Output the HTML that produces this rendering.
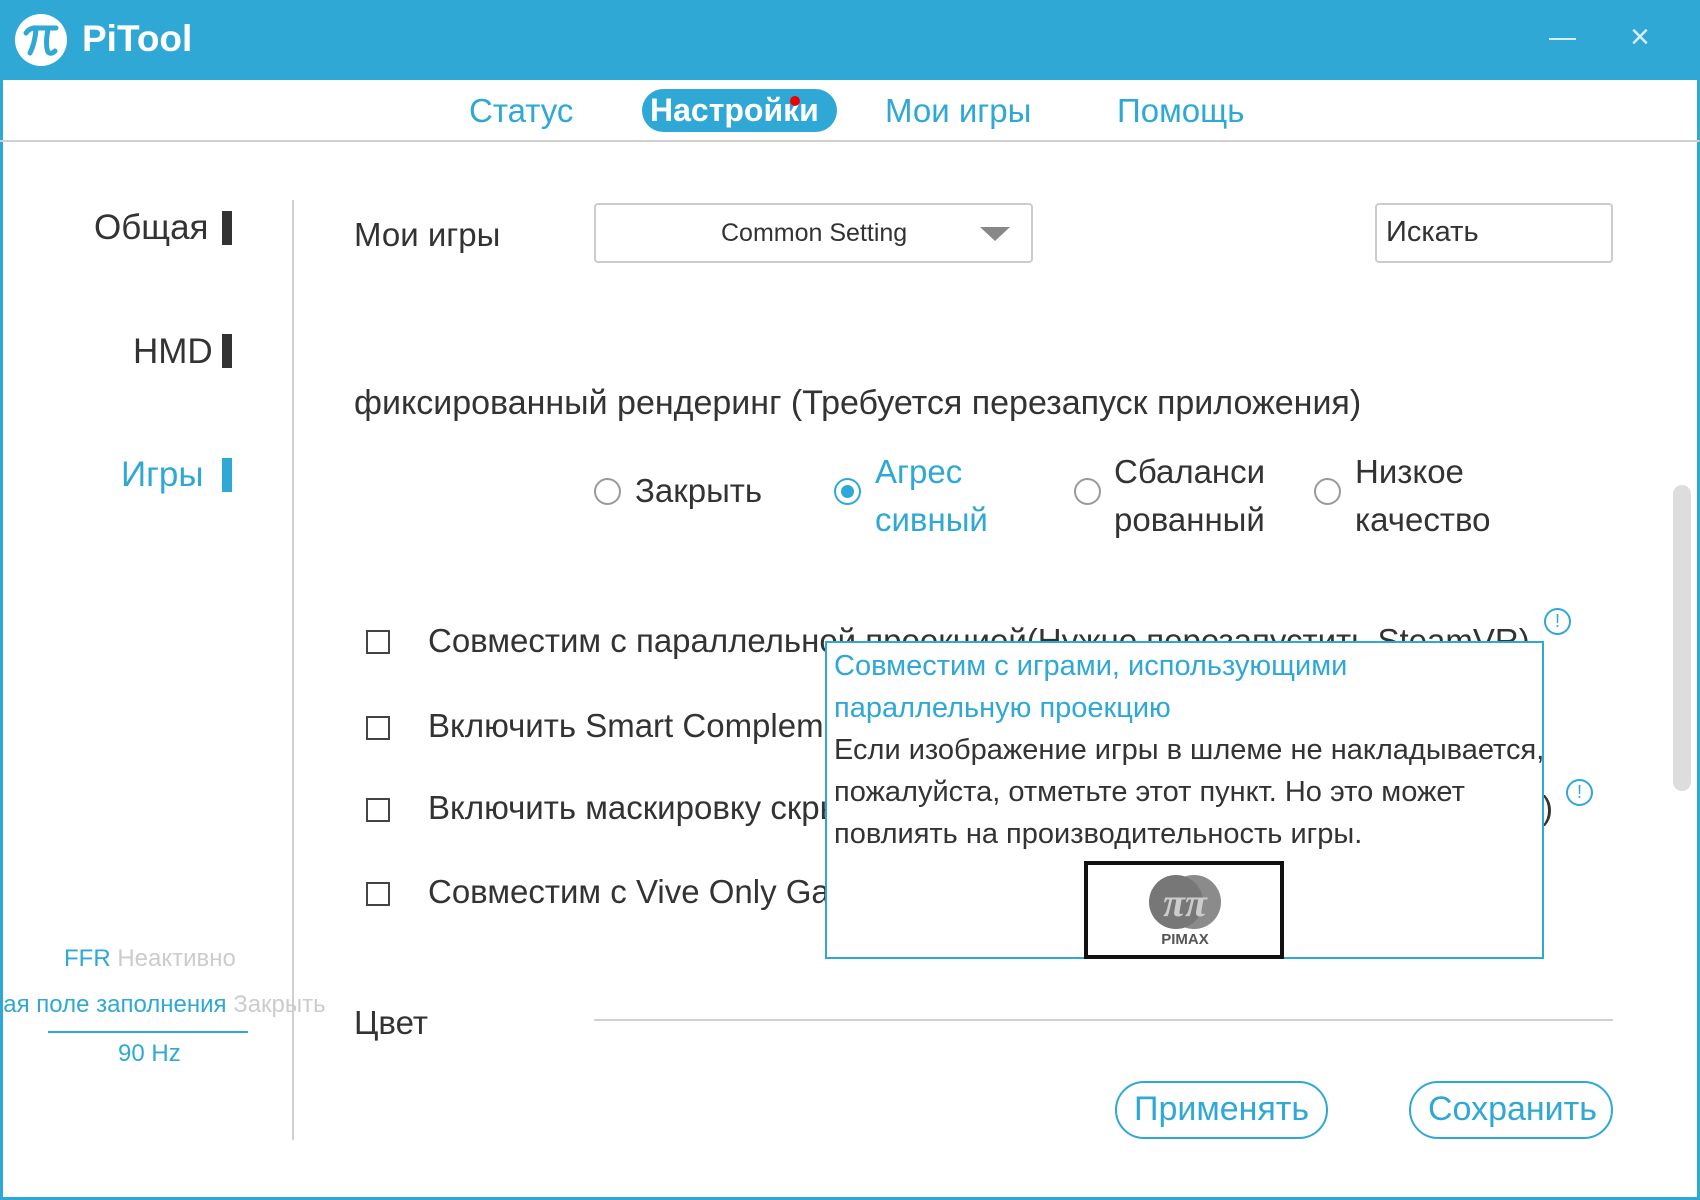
<!DOCTYPE html>
<html><head><meta charset="utf-8"><style>
*{margin:0;padding:0;box-sizing:border-box}
body{width:1700px;height:1200px;position:relative;background:#fff;overflow:hidden;font-family:"Liberation Sans","Noto Sans CJK SC",sans-serif;color:#333}
.a{position:absolute;white-space:nowrap}
.blue{color:#2fa8d5}
.cb{position:absolute;width:24px;height:24px;border:2px solid #444;left:366px}
.rad{position:absolute;width:27px;height:27px;border:2px solid #999;border-radius:50%}
.t{font-size:32px}
.c{font-size:33px}
.info{position:absolute;width:27px;height:27px;border:2px solid #2fa8d5;border-radius:50%;color:#2fa8d5;font-size:18px;text-align:center;line-height:23px}
</style></head><body>
<div class="a" style="left:0;top:0;width:1700px;height:80px;background:#2fa8d5"></div>
<div class="a" style="left:0;top:80px;width:3px;height:1120px;background:#2fa8d5"></div>
<div class="a" style="right:0;top:80px;width:3px;height:1120px;background:#2fa8d5"></div>
<div class="a" style="left:0;bottom:0;width:1700px;height:3px;background:#2fa8d5"></div>
<svg class="a" style="left:14px;top:13px" width="54" height="54" viewBox="0 0 54 54"><circle cx="27" cy="27" r="26" fill="#fff"/><path d="M12 20 Q16 14 24 15 L42 15" stroke="#2fa8d5" stroke-width="5" fill="none" stroke-linecap="round"/><path d="M22 16 Q21 30 16 40" stroke="#2fa8d5" stroke-width="5" fill="none" stroke-linecap="round"/><path d="M34 16 Q31 32 34 39 Q37 42 41 38" stroke="#2fa8d5" stroke-width="5" fill="none" stroke-linecap="round"/></svg>
<div class="a" style="left:82px;top:18px;font-size:37px;font-weight:bold;color:#fff">PiTool</div>
<div class="a" style="left:1549px;top:38px;width:27px;height:2px;background:#d8eef7"></div>
<div class="a" style="left:1630px;top:18px;font-size:34px;color:#d8eef7">×</div>
<div class="a" style="left:0;top:140px;width:1700px;height:2px;background:#d0d0d0"></div>
<div class="a blue" style="left:469px;top:92px;font-size:33px">Статус</div>
<div class="a" style="left:642px;top:89px;width:195px;height:43px;border-radius:22px;background:#2fa8d5"></div>
<div class="a" style="left:650px;top:92px;font-size:32px;font-weight:bold;color:#fff">Настройки</div>
<div class="a" style="left:790px;top:96px;width:10px;height:10px;border-radius:50%;background:#e00"></div>
<div class="a blue" style="left:885px;top:92px;font-size:33px">Мои игры</div>
<div class="a blue" style="left:1117px;top:92px;font-size:33px">Помощь</div>

<div class="a" style="left:94px;top:208px;font-size:35px">Общая</div>
<div class="a" style="left:222px;top:211px;width:10px;height:34px;background:#333"></div>
<div class="a" style="left:133px;top:332px;font-size:35px">HMD</div>
<div class="a" style="left:222px;top:334px;width:10px;height:34px;background:#333"></div>
<div class="a blue" style="left:121px;top:455px;font-size:35px">Игры</div>
<div class="a" style="left:222px;top:458px;width:10px;height:34px;background:#2fa8d5"></div>
<div class="a" style="left:292px;top:200px;width:2px;height:940px;background:#d0d0d0"></div>

<div class="a blue" style="left:64px;top:945px;font-size:24px">FFR <span style="color:#ccc">Неактивно</span></div>
<div class="a blue" style="left:-10px;top:991px;font-size:24px">ная поле заполнения <span style="color:#ccc">Закрыть</span></div>
<div class="a" style="left:48px;top:1031px;width:200px;height:2px;background:#2fa8d5"></div>
<div class="a blue" style="left:118px;top:1040px;font-size:24px">90 Hz</div>

<div class="a" style="left:354px;top:216px;font-size:33px">Мои игры</div>
<div class="a" style="left:594px;top:203px;width:439px;height:60px;border:2px solid #ccc;border-radius:4px"></div>
<div class="a" style="left:721px;top:219px;font-size:25px">Common Setting</div>
<div class="a" style="left:980px;top:227px;width:0;height:0;border-left:15px solid transparent;border-right:15px solid transparent;border-top:14px solid #888"></div>
<div class="a" style="left:1375px;top:203px;width:238px;height:60px;border:2px solid #ccc;border-radius:4px"></div>
<div class="a" style="left:1386px;top:216px;font-size:29px">Искать</div>

<div class="a" style="left:354px;top:384px;font-size:34px">фиксированный рендеринг (Требуется перезапуск приложения)</div>
<div class="rad" style="left:594px;top:478px"></div>
<div class="a c" style="left:635px;top:472px">Закрыть</div>
<div class="rad" style="left:834px;top:478px;border-color:#2fa8d5"></div>
<div class="a" style="left:841px;top:485px;width:13px;height:13px;border-radius:50%;background:#2fa8d5"></div>
<div class="a c blue" style="left:875px;top:448px;line-height:48px">Агрес<br>сивный</div>
<div class="rad" style="left:1074px;top:478px"></div>
<div class="a c" style="left:1114px;top:448px;line-height:48px">Сбаланси<br>рованный</div>
<div class="rad" style="left:1314px;top:478px"></div>
<div class="a c" style="left:1355px;top:448px;line-height:48px">Низкое<br>качество</div>

<div class="cb" style="top:630px"></div>
<div class="a c" style="left:428px;top:622px">Совместим с параллельной проекцией(Нужно перезапустить SteamVR)</div>
<div class="info" style="left:1544px;top:608px">!</div>
<div class="cb" style="top:716px"></div>
<div class="a c" style="left:428px;top:707px">Включить Smart Complement</div>
<div class="cb" style="top:798px"></div>
<div class="a c" style="left:428px;top:789px">Включить маскировку скрытой области</div>
<div class="a c" style="left:1542px;top:789px">)</div>
<div class="info" style="left:1566px;top:779px">!</div>
<div class="cb" style="top:882px"></div>
<div class="a c" style="left:428px;top:873px">Совместим с Vive Only Games</div>

<div class="a" style="left:825px;top:641px;width:719px;height:318px;border:2px solid #2fa8d5;background:#fff"></div>
<div class="a" style="left:834px;top:645px;font-size:29px;line-height:42px"><span class="blue">Совместим с играми, использующими<br>параллельную проекцию</span><br>Если изображение игры в шлеме не накладывается,<br>пожалуйста, отметьте этот пункт. Но это может<br>повлиять на производительность игры.</div>
<div class="a" style="left:1084px;top:861px;width:200px;height:98px;border:4px solid #111;background:#fff"></div>
<svg class="a" style="left:1140px;top:870px" width="90" height="80" viewBox="0 0 90 80"><circle cx="36" cy="32" r="27" fill="#777"/><circle cx="54" cy="32" r="27" fill="#777" opacity=".85"/><text x="45" y="46" text-anchor="middle" font-size="40" font-style="italic" font-weight="bold" fill="#ccc" font-family="Liberation Serif,serif">ππ</text><text x="45" y="74" text-anchor="middle" font-size="15" font-weight="bold" fill="#555" font-family="Liberation Sans,sans-serif">PIMAX</text></svg>

<div class="a" style="left:354px;top:1004px;font-size:33px">Цвет</div>
<div class="a" style="left:594px;top:1019px;width:1019px;height:2px;background:#d0d0d0"></div>
<div class="a" style="left:1115px;top:1081px;width:213px;height:58px;border:2px solid #2fa8d5;border-radius:29px"></div>
<div class="a blue" style="left:1134px;top:1090px;font-size:34px">Применять</div>
<div class="a" style="left:1409px;top:1081px;width:204px;height:58px;border:2px solid #2fa8d5;border-radius:29px"></div>
<div class="a blue" style="left:1428px;top:1090px;font-size:34px">Сохранить</div>
<div class="a" style="left:1673px;top:485px;width:18px;height:306px;border-radius:9px;background:#ddd"></div>
</body></html>
